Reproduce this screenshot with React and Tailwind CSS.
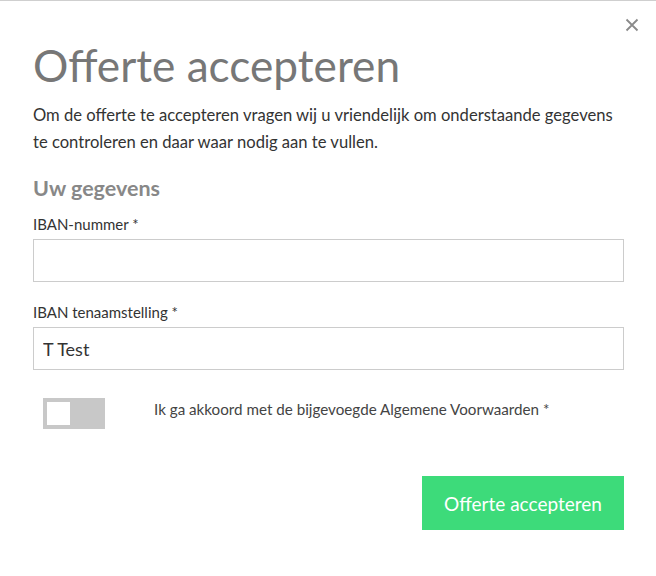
import React from "react";

export default function App() {
  return (
    <div className="relative w-[656px] h-[576px] bg-white border-t border-[#cfcfcf] font-['Lato',sans-serif] overflow-hidden">
      <button className="absolute right-[17px] top-[17px] w-[14px] h-[14px] flex items-center justify-center">
        <svg width="14" height="14" viewBox="0 0 14 14" fill="none">
          <path d="M1.5 1.5L12.5 12.5M12.5 1.5L1.5 12.5" stroke="#8a8a8a" strokeWidth="1.8" strokeLinecap="butt" />
        </svg>
      </button>
      <div className="flex flex-col pl-[33px] pr-[32px] pt-[39px]">
        <h1 className="text-[44.2px] leading-[50px] text-[#777777] font-normal">Offerte accepteren</h1>
        <p className="mt-[12px] text-[16.6px] leading-[27px] text-[#333333]">
          Om de offerte te accepteren vragen wij u vriendelijk om onderstaande gegevens te controleren en daar waar nodig aan te vullen.
        </p>
        <h2 className="mt-[20px] text-[21.5px] leading-[24px] font-bold text-[#888888]">Uw gegevens</h2>
        <label className="mt-[14px] text-[15px] leading-[20px] text-[#333333]">IBAN-nummer *</label>
        <input className="mt-[5px] h-[43px] w-full border border-[#cccccc] px-[9px] text-[18px] text-[#333333] outline-none" defaultValue="" />
        <label className="mt-[20px] text-[15px] leading-[20px] text-[#333333]">IBAN tenaamstelling *</label>
        <input className="mt-[5px] h-[43px] w-full border border-[#cccccc] px-[9px] text-[18px] text-[#333333] outline-none" defaultValue="T Test" />
        <div className="mt-[28px] flex items-start pl-[10px]">
          <div className="w-[62px] h-[31px] bg-[#c8c8c8] p-[4px] shrink-0">
            <div className="w-[23px] h-[23px] bg-white" />
          </div>
          <span className="ml-[49px] mt-[1px] text-[15.2px] leading-[20px] text-[#444444]">
            Ik ga akkoord met de bijgevoegde Algemene Voorwaarden *
          </span>
        </div>
        <div className="mt-[47px] flex justify-end">
          <button className="w-[202px] h-[54px] bg-[#3ddb7a] text-white text-[19px] leading-none flex items-center justify-center">
            Offerte accepteren
          </button>
        </div>
      </div>
    </div>
  );
}
